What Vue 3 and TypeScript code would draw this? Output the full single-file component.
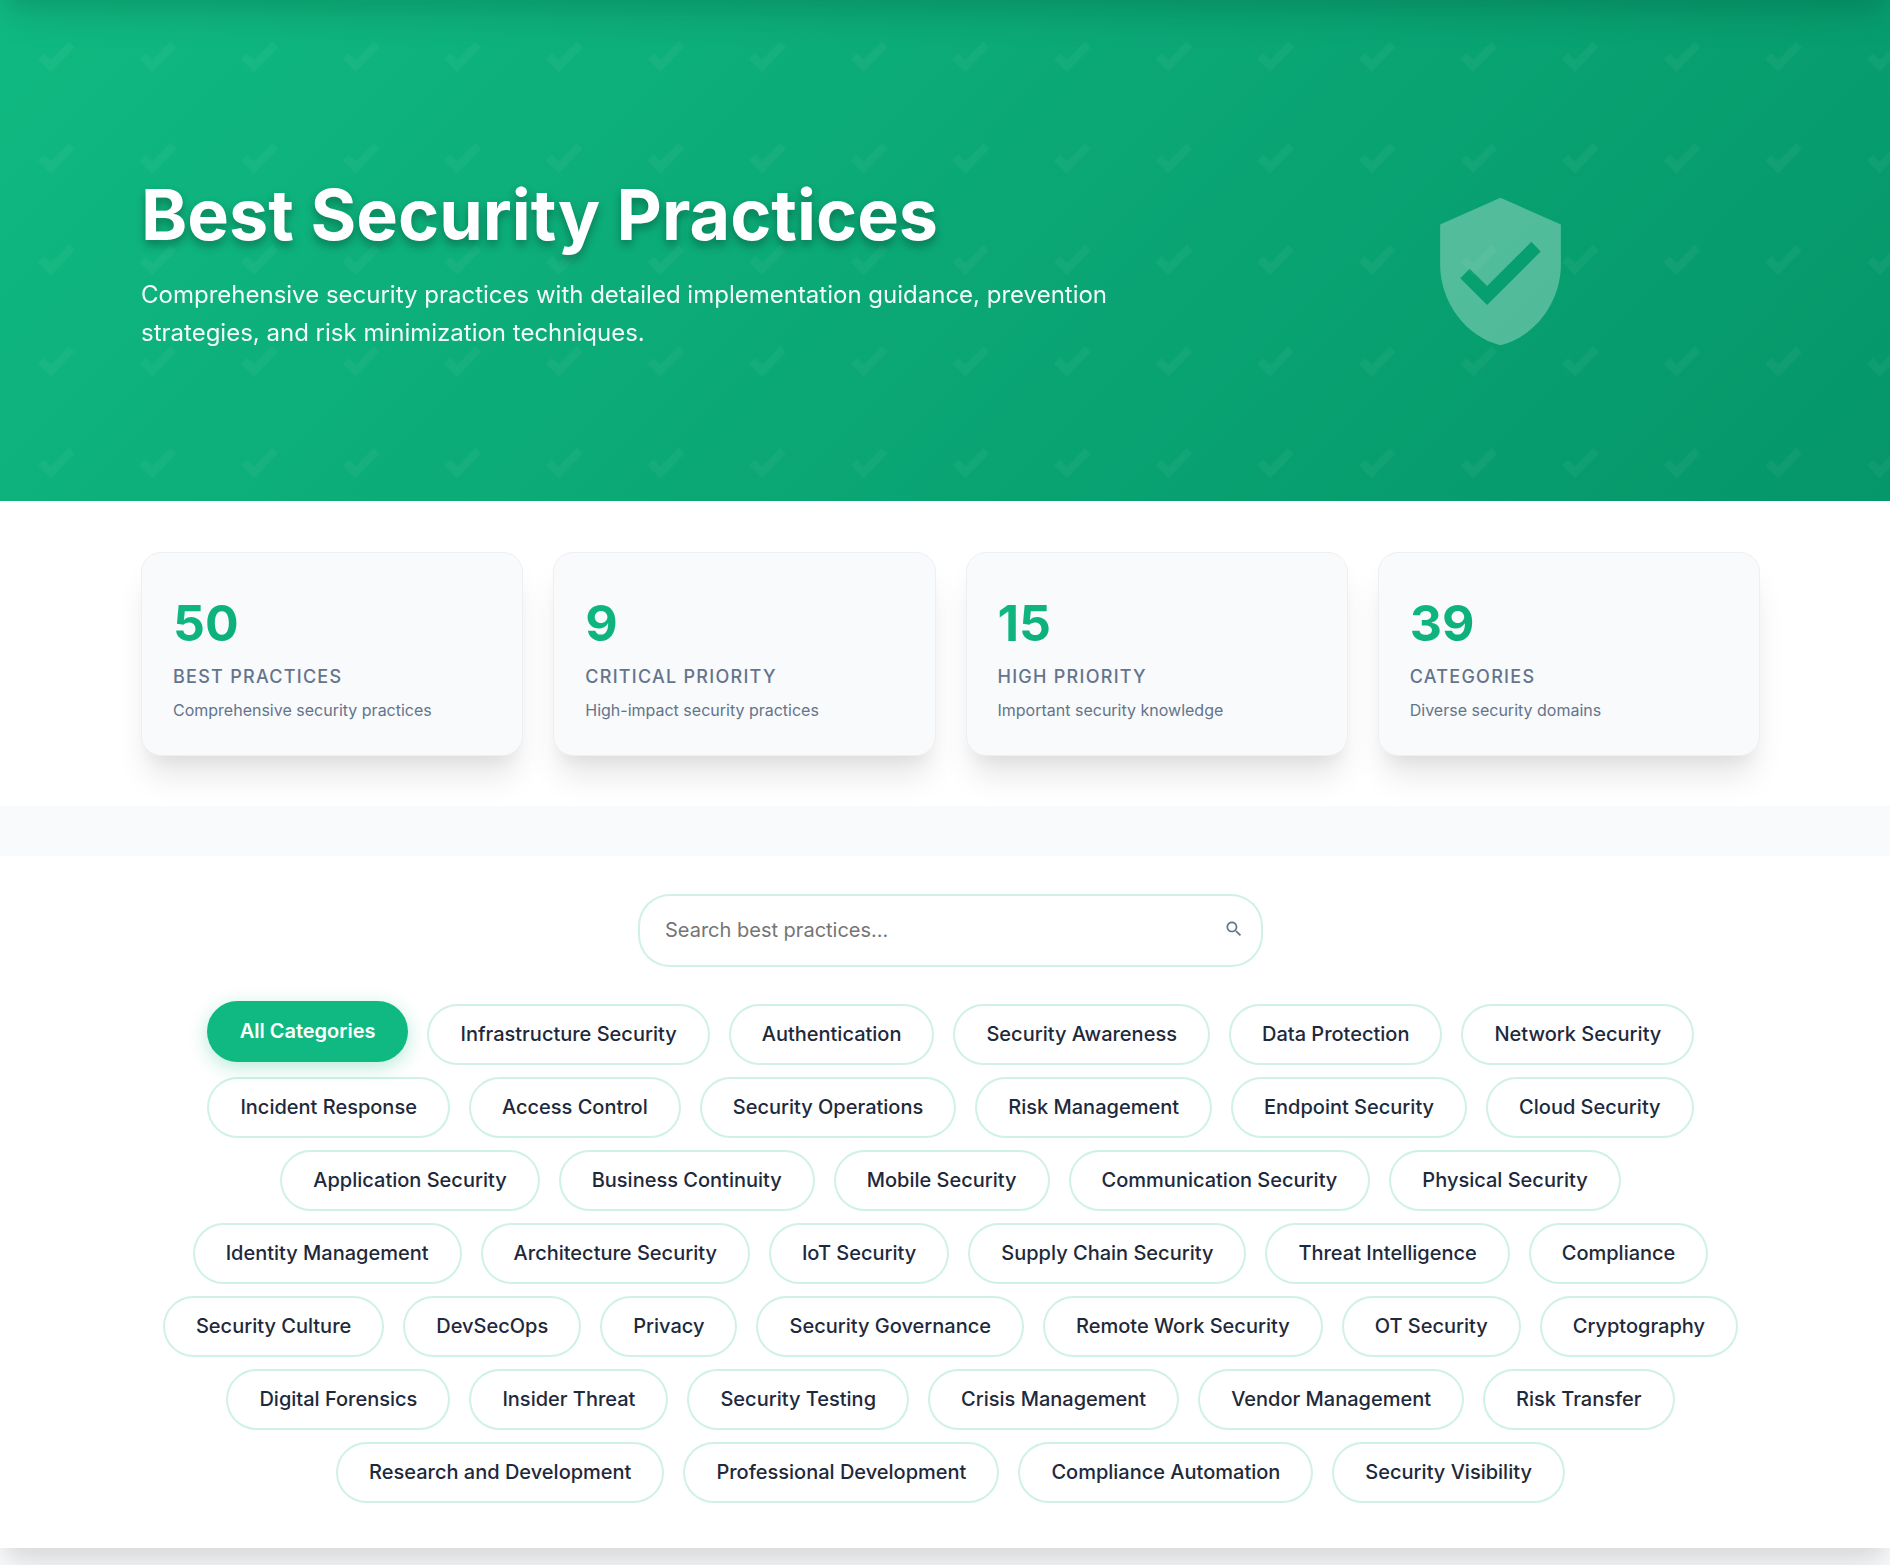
<script setup lang="ts">
import { ref } from 'vue'

interface Stat {
  value: number
  label: string
  note: string
}

const stats: Stat[] = [
  { value: 50, label: 'Best Practices', note: 'Comprehensive security practices' },
  { value: 9, label: 'Critical Priority', note: 'High-impact security practices' },
  { value: 15, label: 'High Priority', note: 'Important security knowledge' },
  { value: 39, label: 'Categories', note: 'Diverse security domains' },
]

const categories: string[] = [
  'All Categories',
  'Infrastructure Security',
  'Authentication',
  'Security Awareness',
  'Data Protection',
  'Network Security',
  'Incident Response',
  'Access Control',
  'Security Operations',
  'Risk Management',
  'Endpoint Security',
  'Cloud Security',
  'Application Security',
  'Business Continuity',
  'Mobile Security',
  'Communication Security',
  'Physical Security',
  'Identity Management',
  'Architecture Security',
  'IoT Security',
  'Supply Chain Security',
  'Threat Intelligence',
  'Compliance',
  'Security Culture',
  'DevSecOps',
  'Privacy',
  'Security Governance',
  'Remote Work Security',
  'OT Security',
  'Cryptography',
  'Digital Forensics',
  'Insider Threat',
  'Security Testing',
  'Crisis Management',
  'Vendor Management',
  'Risk Transfer',
  'Research and Development',
  'Professional Development',
  'Compliance Automation',
  'Security Visibility',
]

const active = ref('All Categories')
const query = ref('')
</script>

<template>
  <main class="page">
    <section class="hero">
      <svg class="hero-pattern" viewBox="0 0 1488 395" preserveAspectRatio="xMinYMin slice" aria-hidden="true">
        <defs>
          <pattern id="ticks" width="80" height="80" patternUnits="userSpaceOnUse">
            <path d="M40 47.3L54.2 32.8 58.6 37.2 40 56.4 29.9 46.4 34.5 42z" fill="#fff" fill-opacity="0.04" />
          </pattern>
        </defs>
        <rect width="1488" height="800" fill="url(#ticks)" />
      </svg>
      <div class="hero-inner">
        <div class="hero-text">
          <h1>Best Security Practices</h1>
          <p>
            Comprehensive security practices with detailed implementation guidance, prevention strategies, and risk
            minimization techniques.
          </p>
        </div>
        <svg class="shield" viewBox="0 0 24 24" aria-hidden="true">
          <path
            fill="currentColor"
            d="M12 1L3 5v6c0 5.55 3.84 10.74 9 12 5.16-1.26 9-6.45 9-12V5l-9-4zm-2 16l-4-4 1.41-1.41L10 14.17l6.59-6.59L18 9l-8 8z"
          />
        </svg>
      </div>
    </section>

    <section class="stats">
      <article v-for="stat in stats" :key="stat.label" class="stat">
        <div class="stat-value">{{ stat.value }}</div>
        <div class="stat-label">{{ stat.label }}</div>
        <div class="stat-note">{{ stat.note }}</div>
      </article>
    </section>

    <section class="filters">
      <div class="search">
        <input v-model="query" type="text" aria-label="Search best practices" placeholder="Search best practices..." />
        <svg class="search-icon" viewBox="0 0 24 24" aria-hidden="true">
          <path
            fill="currentColor"
            d="M15.5 14h-.79l-.28-.27C15.41 12.59 16 11.11 16 9.5 16 5.91 13.09 3 9.5 3S3 5.91 3 9.5 5.91 16 9.5 16c1.61 0 3.09-.59 4.23-1.57l.27.28v.79l5 4.99L20.49 19l-4.99-5zm-6 0C7.01 14 5 11.99 5 9.5S7.01 5 9.5 5 14 7.01 14 9.5 11.99 14 9.5 14z"
          />
        </svg>
      </div>
      <div class="pills">
        <button
          v-for="name in categories"
          :key="name"
          type="button"
          class="pill"
          :class="{ active: name === active }"
          @click="active = name"
        >
          {{ name }}
        </button>
      </div>
    </section>
  </main>
</template>

<style>
body {
  margin: 0;
  background: #f8fafc;
}
</style>

<style scoped>
.page {
  --green: #10b981;
  --green-dark: #059669;
  --green-line: rgba(16, 185, 129, 0.2);
  --muted: #64748b;
  --shadow: 0 25px 32px -6px rgba(0, 0, 0, 0.1), 0 13px 13px -6px rgba(0, 0, 0, 0.04);
  min-height: 100vh;
  font-family: Inter, sans-serif;
  line-height: 1.6;
  color: #1e293b;
}

.hero {
  position: relative;
  overflow: hidden;
  padding: 172px 130px 130px 141px;
  background: linear-gradient(135deg, var(--green) 0%, var(--green-dark) 100%);
  color: #fff;
}

.hero::before {
  content: '';
  position: absolute;
  inset: -80px 0 auto;
  height: 80px;
  box-shadow: var(--shadow);
}

.hero-pattern {
  position: absolute;
  inset: 0;
  width: 100%;
  height: 100%;
}

.hero-inner {
  position: relative;
  display: grid;
  grid-template-columns: 2fr 1fr;
  gap: 61px;
  align-items: center;
}

h1 {
  margin: 0 0 19px;
  font-size: 70px;
  font-weight: 700;
  line-height: 85px;
  text-shadow: 0 5px 10px rgba(0, 0, 0, 0.3);
}

.hero-text p {
  margin: 0 0 19px;
  font-size: 24px;
  line-height: 38px;
  opacity: 0.95;
}

.shield {
  justify-self: center;
  width: 161px;
  height: 161px;
  color: rgba(255, 255, 255, 0.3);
}

.stats {
  display: grid;
  grid-template-columns: repeat(4, 1fr);
  gap: 30px;
  padding: 51px 130px 50px 141px;
  background: #fff;
  overflow: hidden;
}

.stat {
  padding: 31px 31px 32px;
  border: 1px solid #edeff2;
  border-radius: 20px;
  background: #f8fafc;
  box-shadow: var(--shadow);
}

.stat-value {
  font-size: 50px;
  font-weight: 700;
  line-height: 78px;
  color: transparent;
  background: linear-gradient(135deg, var(--green), var(--green-dark));
  background-clip: text;
}

.stat-label {
  font-size: 18px;
  font-weight: 500;
  line-height: 29px;
  letter-spacing: 0.07em;
  text-transform: uppercase;
  color: var(--muted);
}

.stat-note {
  margin-top: 6px;
  font-size: 16px;
  line-height: 26px;
  color: var(--muted);
}

.filters {
  position: relative;
  z-index: 1;
  margin-top: 50px;
  padding: 38px 130px 45px 141px;
  background: #fff;
  box-shadow: var(--shadow);
}

.search {
  position: relative;
  max-width: 625px;
  margin: 0 auto 37px;
}

.search input {
  display: block;
  box-sizing: border-box;
  width: 100%;
  height: 73px;
  padding: 0 64px 2px 25px;
  border: 2px solid var(--green-line);
  border-radius: 32px;
  background: #fff;
  font: 400 20px/32px Inter, sans-serif;
  color: inherit;
}

.search input::placeholder {
  color: #757575;
}

.search-icon {
  position: absolute;
  top: 25px;
  right: 19px;
  width: 20px;
  height: 20px;
  color: var(--muted);
}

.pills {
  display: flex;
  flex-wrap: wrap;
  justify-content: center;
  gap: 12px 19px;
}

.pill {
  padding: 13px 31px;
  border: 2px solid var(--green-line);
  border-radius: 32px;
  background: #fff;
  font: inherit;
  font-size: 20px;
  font-weight: 500;
  line-height: 31px;
  color: inherit;
  cursor: pointer;
}

.pill.active {
  background: var(--green);
  color: #fff;
  font-weight: 600;
  transform: translateY(-3px);
  box-shadow: 0 5px 19px rgba(16, 185, 129, 0.3);
}
</style>
